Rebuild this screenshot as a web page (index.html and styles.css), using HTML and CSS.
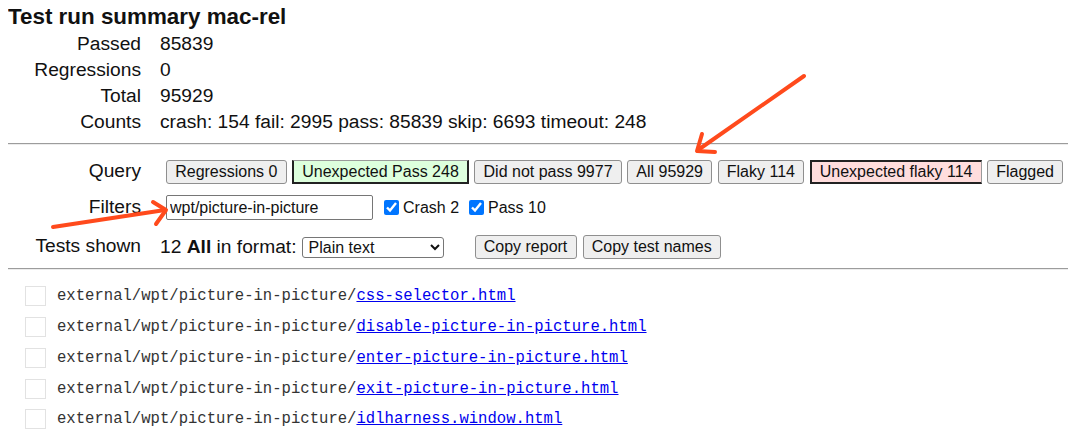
FILE: index.html
```html
<!DOCTYPE html>
<html>
<head>
<meta charset="utf-8">
<title>Test run summary mac-rel</title>
<link rel="stylesheet" href="styles.css">
</head>
<body>
<h1 class="title">Test run summary mac-rel</h1>
<div class="summary">
  <div class="label">Passed</div><div class="value">85839</div>
  <div class="label">Regressions</div><div class="value">0</div>
  <div class="label">Total</div><div class="value">95929</div>
  <div class="label">Counts</div><div class="value">crash: 154 fail: 2995 pass: 85839 skip: 6693 timeout: 248</div>
</div>
<hr class="rule">
<div class="controls">
  <div class="label">Query</div>
  <div class="value query">
    <button class="btn">Regressions 0</button>
    <button class="btn btn-pass">Unexpected Pass 248</button>
    <button class="btn">Did not pass 9977</button>
    <button class="btn">All 95929</button>
    <button class="btn">Flaky 114</button>
    <button class="btn btn-flaky">Unexpected flaky 114</button>
    <button class="btn">Flagged</button>
  </div>
  <div class="label">Filters</div>
  <div class="value filters">
    <input class="filter-input" type="text" value="wpt/picture-in-picture">
    <label class="check"><input class="checkbox" type="checkbox" checked>Crash 2</label>
    <label class="check"><input class="checkbox" type="checkbox" checked>Pass 10</label>
  </div>
  <div class="label">Tests shown</div>
  <div class="value shown">
    <span class="count">12 <b>All</b> in format:</span>
    <select class="format"><option>Plain text</option><option>JSON</option><option>CSV</option></select>
    <button class="btn copy-first">Copy report</button>
    <button class="btn">Copy test names</button>
  </div>
</div>
<hr class="rule rule-bottom">
<ul class="tests">
  <li class="test"><span class="box"></span><span class="path">external/wpt/picture-in-picture/<a href="#">css-selector.html</a></span></li>
  <li class="test"><span class="box"></span><span class="path">external/wpt/picture-in-picture/<a href="#">disable-picture-in-picture.html</a></span></li>
  <li class="test"><span class="box"></span><span class="path">external/wpt/picture-in-picture/<a href="#">enter-picture-in-picture.html</a></span></li>
  <li class="test"><span class="box"></span><span class="path">external/wpt/picture-in-picture/<a href="#">exit-picture-in-picture.html</a></span></li>
  <li class="test"><span class="box"></span><span class="path">external/wpt/picture-in-picture/<a href="#">idlharness.window.html</a></span></li>
</ul>
<svg class="arrows" width="1076" height="431" viewBox="0 0 1076 431" aria-hidden="true">
  <g fill="none" stroke="#ff4a1c" stroke-width="4" stroke-linecap="round" stroke-linejoin="round">
    <path d="M804 76 L698 150"/>
    <path d="M702 134 L697 151 L715 152"/>
    <path d="M53 227 L165 210"/>
    <path d="M153 202 L166 210 L156 224"/>
  </g>
</svg>
</body>
</html>
```

FILE: styles.css
```css
html, body {
  background: #ffffff;
}
body {
  margin: 0 8px;
  font-family: "Liberation Sans", Arial, sans-serif;
  font-size: 19.2px;
  color: #111;
}
.title {
  margin: 4px 0 0 0;
  font-size: 22.4px;
  line-height: 26px;
  font-weight: bold;
}
.summary {
  display: grid;
  grid-template-columns: 133px 1fr;
  column-gap: 19px;
  grid-auto-rows: 26px;
  line-height: 26px;
  margin-top: 1px;
}
.label {
  text-align: right;
  white-space: nowrap;
}
.value {
  white-space: nowrap;
}
.rule {
  height: 0;
  border: 0;
  border-top: 1px solid #9c9c9c;
  border-bottom: 1px solid #ececec;
  margin: 8px -8px 9px -1px;
}
.rule-bottom {
  margin: 0 -8px 0 -1px;
}
.controls {
  display: grid;
  grid-template-columns: 133px 1fr;
  column-gap: 19px;
  grid-template-rows: 36px 35px 43px;
  align-items: center;
}
.controls .label {
  line-height: 22px;
  padding-bottom: 2px;
}
.query, .filters, .shown {
  display: flex;
  align-items: center;
}
.query {
  padding-left: 6px;
  gap: 5.4px;
}
.btn {
  box-sizing: border-box;
  height: 24px;
  margin: 0;
  padding: 0 8.2px;
  font-family: "Liberation Sans", Arial, sans-serif;
  font-size: 16px;
  color: #111;
  background: #efefef;
  border: 1px solid #8f8f8f;
  border-radius: 3px;
  white-space: nowrap;
}
.btn-pass {
  background: #ddffdd;
  border-style: solid;
  border-width: 1px 2px 2px 2px;
  border-color: #9a9a9a #222 #222 #222;
  border-radius: 0;
}
.btn-flaky {
  background: #ffdddd;
  border-style: solid;
  border-width: 2px 1px 2px 2px;
  border-color: #222 #9a9a9a #222 #222;
  border-radius: 0;
}
.filters {
  padding-left: 6px;
}
.filter-input {
  box-sizing: border-box;
  width: 207px;
  height: 25px;
  margin: 0;
  padding: 0 3px;
  font-family: "Liberation Sans", Arial, sans-serif;
  font-size: 16px;
  color: #111;
  border: 1px solid #767676;
  border-radius: 2px;
  background: #fff;
}
.check {
  display: flex;
  align-items: center;
  font-size: 16px;
  margin-left: 10px;
}
.check:first-of-type {
  margin-left: 11px;
}
.checkbox {
  width: 15px;
  height: 15px;
  margin: 0 4px 0 0;
  accent-color: #0075ff;
}
.count {
  white-space: pre;
}
.format {
  box-sizing: border-box;
  width: 142px;
  height: 21px;
  margin: 1px 0 0 5px;
  padding: 0 2px;
  font-family: "Liberation Sans", Arial, sans-serif;
  font-size: 16px;
  color: #111;
  background: #fff;
  border: 1px solid #767676;
  border-radius: 3px;
}
.copy-first {
  margin-left: 31px;
  margin-right: 6px;
}
.tests {
  list-style: none;
  margin: 11px 0 0 0;
  padding: 0;
}
.test {
  display: flex;
  align-items: center;
  height: 30.75px;
}
.box {
  box-sizing: border-box;
  width: 21px;
  height: 20px;
  margin: 0 11px 0 17px;
  border: 1px solid #e2e2e2;
  background: #fff;
}
.path {
  font-family: "Liberation Mono", "Courier New", monospace;
  font-size: 15.6px;
  color: #333;
  white-space: nowrap;
}
.path a {
  color: #0000ee;
  text-decoration: underline;
}
.arrows {
  position: absolute;
  left: 0;
  top: 0;
  pointer-events: none;
}
```
